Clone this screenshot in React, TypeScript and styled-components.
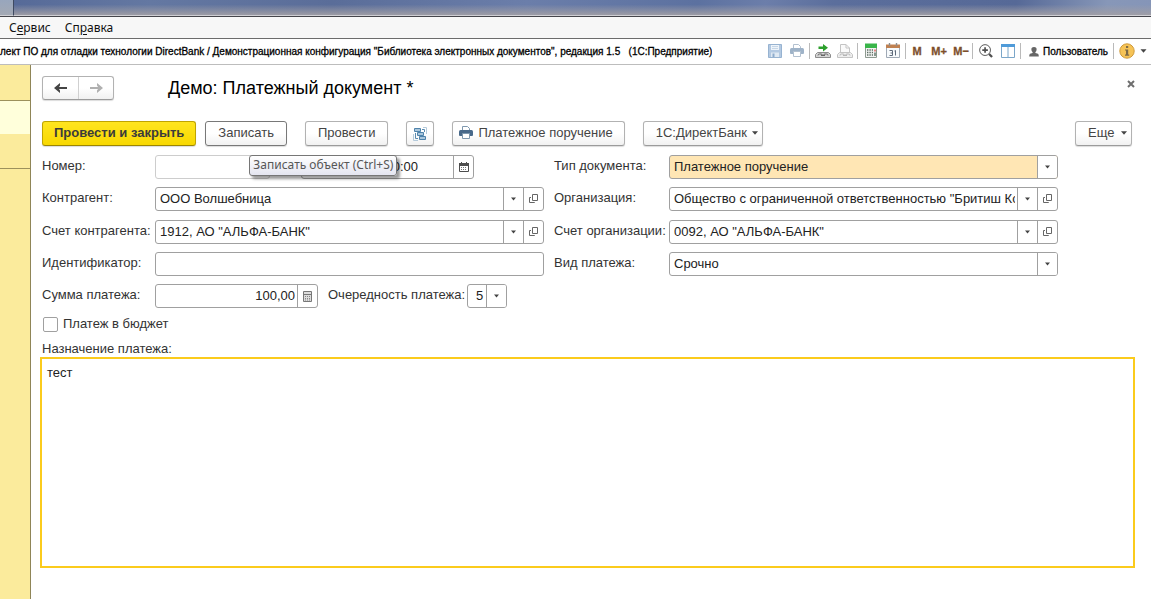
import React from "react";
import styled, { createGlobalStyle, css } from "styled-components";

const GlobalStyle = createGlobalStyle`
  *, *::before, *::after { box-sizing: border-box; }
  body {
    margin: 0;
    background: #fff;
    color: #333;
    font: 13px/16px "Liberation Sans", Arial, sans-serif;
  }
  button, input, select, textarea { font: inherit; color: inherit; margin: 0; }
`;

const uiFont = `"Noto Sans", "Segoe UI", sans-serif`;

const Page = styled.div`
  display: flex;
  flex-direction: column;
  min-height: 100vh;
`;

const WindowFrame = styled.div`
  display: flex;
  height: 17px;
  flex: none;
  border-bottom: 1px solid #45454b;
`;
const FrameCorner = styled.div`
  width: 14px;
  border-right: 1px solid #3f4a61;
  border-bottom: 1px solid #cfcfd4;
  background: linear-gradient(#98a6bd, #a3a9b4);
`;
const FrameGlass = styled.div`
  flex: 1;
  border-bottom: 1px solid #cfcfd4;
  background:
    linear-gradient(rgba(160, 158, 165, 0) 30%, rgba(160, 158, 165, 0.95)),
    linear-gradient(100deg, #566a98 0%, #6478a2 12%, #5a6d99 28%, #6b7eaa 45%, #5c71a0 60%, #6c7eaa 66%, #5b6e9c 72%, #566997 88%, #8797b8 96%, #8595b8 100%);
`;

const MenuBar = styled.nav`
  display: flex;
  flex: none;
  gap: 14px;
  height: 22px;
  padding: 0 9px;
  align-items: center;
  background: #f7f7f7;
  border-bottom: 1px solid #6c6c6c;
`;
const MenuItem = styled.button`
  padding: 0;
  border: 0;
  background: none;
  color: #111;
  font: 12px/20px ${uiFont};
  u { text-underline-offset: 2px; }
`;

const TitleBar = styled.header`
  display: flex;
  flex: none;
  height: 26px;
  align-items: center;
  justify-content: space-between;
  border-bottom: 1px solid #bdbdbd;
  color: #000;
  font-size: 10px;
  white-space: pre;
`;
const AppTitle = styled.div`
  min-width: 0;
  overflow: hidden;
  -webkit-text-stroke: 0.3px #000;
`;
const Tools = styled.div`
  display: flex;
  align-items: center;
  padding: 0 4px 2px 0;
`;
const ToolGroup = styled.div<{ $flush?: boolean; $plain?: boolean }>`
  display: flex;
  height: 16px;
  align-items: center;
  gap: ${(p) => (p.$flush ? 0 : 6)}px;
  padding: ${(p) => (p.$flush ? "0" : "0 4px 0 5px")};
  border-left: ${(p) => (p.$plain ? "0" : "1px solid #bababa")};
`;
const ToolButton = styled.button<{ $width?: number }>`
  display: flex;
  width: ${(p) => p.$width ?? 16}px;
  height: 16px;
  padding: 0;
  border: 0;
  align-items: center;
  justify-content: center;
  background: none;
  svg { flex: none; }
`;
const MemoryButton = styled(ToolButton)`
  color: #7d4f2c;
  font-size: 11px;
  font-weight: bold;
  -webkit-text-stroke: 0.3px #7d4f2c;
`;
const UserButton = styled.button`
  display: flex;
  padding: 2px 1px 0 3px;
  border: 0;
  gap: 4px;
  align-items: center;
  background: none;
  color: #000;
  -webkit-text-stroke: 0.3px #000;
`;

const Workspace = styled.div`
  display: flex;
  flex: 1;
`;
const Sections = styled.aside`
  display: flex;
  flex: none;
  flex-direction: column;
  width: 31px;
  border-right: 1px solid #8f8557;
  background: #fbeb9c;
`;
const Section = styled.div<{ $height: number; $active?: boolean; $line?: boolean }>`
  height: ${(p) => p.$height}px;
  background: ${(p) => (p.$active ? "#ffffdb" : "#fbeb9c")};
  border-bottom: ${(p) => (p.$line ? "1px solid #9c915c" : "0")};
`;

const Main = styled.main`
  display: flex;
  flex: 1;
  min-width: 0;
  flex-direction: column;
  padding: 11px 16px 31px 9px;
`;
const FormHeader = styled.div`
  display: flex;
  height: 24px;
  padding-left: 2px;
  align-items: center;
`;
const raised = css`
  border: 1px solid #b2b2b2;
  border-bottom-color: #9b9b9b;
  border-radius: 3px;
  background: linear-gradient(#fff 50%, #f1f1f1);
  box-shadow: 0 1px 1px rgba(0, 0, 0, 0.14);
`;
const History = styled.div`
  ${raised}
  display: flex;
  height: 24px;
`;
const HistoryButton = styled.button`
  display: flex;
  width: 35px;
  padding: 0;
  border: 0;
  align-items: center;
  justify-content: center;
  background: none;
  & + & { border-left: 1px solid #d0d0d0; }
`;
const FormTitle = styled.h1`
  flex: 1;
  margin: 0 0 0 54px;
  color: #000;
  font-size: 18px;
  font-weight: normal;
  line-height: 24px;
`;
const CloseButton = styled.button`
  display: flex;
  width: 8px;
  height: 16px;
  padding: 0;
  border: 0;
  align-self: flex-start;
  align-items: center;
  background: none;
`;

const Commands = styled.div`
  display: flex;
  height: 25px;
  margin: 21px 3px 9px 2px;
  gap: 18px;
`;
const CommandPair = styled.div`
  display: flex;
  gap: 9px;
`;
const CommandHost = styled.div`
  display: flex;
  position: relative;
`;
type CommandKind = "plain" | "primary" | "icon" | "print" | "menu";
const commandPadding: Record<CommandKind, string> = {
  plain: "0 12px 2px",
  primary: "0 11px 2px",
  icon: "0 6px",
  print: "0 11px 2px 6px",
  menu: "0 4px 2px 12px",
};
const Command = styled.button<{ $kind?: CommandKind; $hover?: boolean; $end?: boolean }>`
  ${raised}
  display: flex;
  height: 25px;
  padding: ${(p) => commandPadding[p.$kind ?? "plain"]};
  align-items: center;
  justify-content: space-between;
  gap: 5px;
  color: #444;
  white-space: nowrap;
  ${(p) => p.$end && css`min-width: 57px; margin-left: auto;`}
  ${(p) => p.$hover && css`border-color: #787878;`}
  ${(p) => p.$kind === "primary" && css`
    border-color: #bfa400;
    border-bottom-color: #9c8600;
    background: linear-gradient(#ffe51f, #f8d800);
    color: #3b3b3b;
    font-weight: bold;
  `}
`;
const Tooltip = styled.div`
  position: absolute;
  z-index: 2;
  top: 34px;
  left: 44px;
  height: 21px;
  padding: 0 3px;
  border: 1px solid #767676;
  border-radius: 3px;
  background: linear-gradient(#fff, #e4e5f0);
  box-shadow: 3px 3px 3px rgba(0, 0, 0, 0.4);
  color: #575757;
  font: 12px/18px ${uiFont};
  white-space: nowrap;
`;

const Fields = styled.div`
  display: grid;
  grid-template-columns: 113px minmax(0, 1fr) 125px minmax(0, 1fr);
  grid-auto-rows: 24px;
  row-gap: 8px;
  margin: 0 77px 0 2px;
  & + & { margin-top: 9px; }
`;
const Label = styled.label<{ $second?: boolean; $width?: number }>`
  width: ${(p) => (p.$width ? `${p.$width}px` : "auto")};
  padding-left: ${(p) => (p.$second ? 10 : 0)}px;
  line-height: 22px;
  white-space: nowrap;
`;
const Cell = styled.div`
  display: flex;
`;
const Box = styled.div<{ $width?: number; $muted?: boolean }>`
  display: flex;
  flex: ${(p) => (p.$width ? "none" : "1")};
  min-width: 0;
  width: ${(p) => (p.$width ? `${p.$width}px` : "auto")};
  height: 24px;
  border: 1px solid ${(p) => (p.$muted ? "#cdcdcd" : "#a0a0a0")};
  border-radius: 3px;
  background: #fff;
`;
const DateBox = styled(Box)`
  margin-left: 31px;
`;
const AmountBox = styled(Box)`
  margin-right: 10px;
`;
const TextInput = styled.input<{ $right?: boolean }>`
  flex: 1;
  min-width: 0;
  width: 100%;
  padding: 0 2px 0 4px;
  border: 0;
  outline: 0;
  background: none;
  color: #222;
  text-align: ${(p) => (p.$right ? "right" : "left")};
`;
const BoxButton = styled.button`
  display: flex;
  flex: none;
  width: 20px;
  padding: 0;
  border: 0;
  border-left: 1px solid #a0a0a0;
  align-items: center;
  justify-content: center;
  background: none;
`;
const SelectBox = styled(Box)<{ $filled?: boolean }>`
  display: grid;
  grid-template-columns: minmax(0, 1fr) 20px;
  background: ${(p) => (p.$filled ? "#ffe6b4" : "#fff")};
`;
const SelectInput = styled.select<{ $indent?: number }>`
  grid-area: 1 / 1 / 2 / 3;
  appearance: none;
  padding: 0 0 0 ${(p) => p.$indent ?? 4}px;
  border: 0;
  outline: 0;
  background: none;
  color: #222;
`;
const SelectArrow = styled.span`
  grid-area: 1 / 2 / 2 / 3;
  display: flex;
  border-left: 1px solid #a0a0a0;
  border-radius: 0 2px 2px 0;
  align-items: center;
  justify-content: center;
  background: #fff;
  pointer-events: none;
`;

const CheckRow = styled.label`
  display: flex;
  height: 16px;
  margin: 8px 0 0 3px;
  align-items: center;
  gap: 5px;
`;
const CheckBox = styled.input`
  appearance: none;
  width: 15px;
  height: 15px;
  border: 1px solid #a0a0a0;
  border-radius: 2px;
  background: #fff;
  &:checked { background: #ffe51f; }
`;
const PurposeLabel = styled.label`
  margin: 9px 0 0 2px;
`;
const Purpose = styled.textarea`
  flex: 1;
  min-height: 120px;
  padding: 6px 5px;
  border: 2px solid #fbcb1c;
  outline: 0;
  background: #fff;
  color: #222;
  resize: none;
`;

const Arrow = ({ size = 6, color = "#444" }: { size?: number; color?: string }) => (
  <svg width={size} height="4" viewBox="0 0 6 4" aria-hidden="true">
    <path d="M0 0.3H6L3 3.8Z" fill={color} />
  </svg>
);
const OpenIcon = () => (
  <svg width="10" height="10" viewBox="0 0 10 10" fill="none" stroke="#666" aria-hidden="true">
    <path d="M3.5 0.5H8.5V6.5H3.5Z M2 3.5H0.5V8.5H5.5V8" />
  </svg>
);
const CalendarIcon = () => (
  <svg width="10" height="10" viewBox="0 0 10 10" aria-hidden="true">
    <path d="M0.5 1.5H9.5V9.5H0.5Z" fill="#fff" stroke="#4d4d4d" />
    <path d="M0 1H10V4H0Z M2 0H3V2H2Z M7 0H8V2H7Z" fill="#4d4d4d" />
    <path d="M2 5.5H8M2 7.5H8" stroke="#777" strokeDasharray="1 1" />
  </svg>
);
const CalculatorIcon = () => (
  <svg width="9" height="11" viewBox="0 0 9 11" aria-hidden="true">
    <path d="M0.5 0.5H8.5V10.5H0.5Z" fill="#ddd" stroke="#777" />
    <path d="M1 3.5H8" stroke="#777" />
    <path d="M2 5.5H7M2 7.5H7M2 9H7" stroke="#888" strokeDasharray="1 1" />
  </svg>
);
const HistoryIcon = ({ color, flip }: { color: string; flip?: boolean }) => (
  <svg width="14" height="10" viewBox="0 0 14 10" fill={color} aria-hidden="true">
    <path d={flip ? "M14 5L8 0V2.4L9 3.9H1V6.1H9L8 7.6V10Z" : "M0 5L6 0V2.4L5 3.9H13V6.1H5L6 7.6V10Z"} />
  </svg>
);
const StructureIcon = () => (
  <svg width="14" height="14" viewBox="0 0 14 14" fill="none" aria-hidden="true">
    <path d="M1.5 1.5H7.5V4.5H1.5Z M4.5 5.5H10.5V8.5H4.5Z M6.5 9.5H12.5V12.5H6.5Z" fill="#a9c6dc" stroke="#4f83ab" />
    <path d="M2.5 6V11.5H5M9 2.5H11.5V5" stroke="#5b8cb0" />
    <path d="M10 0.5H13.5V7M0.5 7V13.5H5" stroke="#b4cadb" />
  </svg>
);
const PrinterIcon = ({ pale }: { pale?: boolean }) => (
  <svg width="14" height="13" viewBox="0 0 14 13" aria-hidden="true">
    <path d="M3.5 4.5V0.5H8.5L10.5 2.5V4.5" fill="#fff" stroke={pale ? "#b3c1d0" : "#7f98ae"} />
    <path d="M1.5 4H12.5Q14 4 14 5.5V9Q14 10 13 10H1Q0 10 0 9V5.5Q0 4 1.5 4Z" fill={pale ? "#9fb3c8" : "#48698a"} />
    <path d="M3.5 7.5H10.5V12.5H3.5Z" fill="#fff" stroke={pale ? "#b3c1d0" : "#7f98ae"} />
  </svg>
);
const SaveIcon = () => (
  <svg width="14" height="14" viewBox="0 0 14 14" aria-hidden="true">
    <path d="M0.5 0.5H13.5V13.5H0.5Z" fill="#b3c9e2" stroke="#97b3d1" />
    <path d="M3 1H11V6H3Z" fill="#eef4fa" />
    <path d="M4 2.5H10M4 4.5H10" stroke="#c6d6e6" />
    <path d="M3 8.5H11V13H3Z" fill="#dfe9f3" />
    <path d="M4.5 9.5H6.5V13H4.5Z" fill="#8dabcc" />
  </svg>
);
const LinkIcon = ({ active }: { active?: boolean }) => (
  <svg width="16" height="16" viewBox="0 0 16 16" fill="none" aria-hidden="true">
    {active ? (
      <path d="M3.5 3.5H8V1L13 4.8L8 8.5V6H3.5Z" fill="#2ca02c" />
    ) : (
      <path d="M3.5 9V1.5H9L12.5 5V9M9 1.5V5H12.5" fill="#fafafa" stroke="#c4c4c4" />
    )}
    <path d="M2.5 9.5H13.5L15.5 11.5V14.5H0.5V11.5Z" fill={active ? "#d5d5d5" : "#eee"} stroke={active ? "#8c8c8c" : "#c4c4c4"} />
    <path d="M3 12.5Q3 11 4.5 11H6Q7.5 11 7.5 12.5M8.5 12.5Q8.5 11 10 11H11.5Q13 11 13 12.5M6 12.5H10" stroke={active ? "#666" : "#b5b5b5"} />
  </svg>
);
const GreenCalculatorIcon = () => (
  <svg width="14" height="15" viewBox="0 0 14 15" aria-hidden="true">
    <path d="M1.5 1.5H12.5V14.5H1.5Z" fill="#f3f3f3" stroke="#8d9a90" />
    <path d="M1 0.5H13V5H1Z" fill="#39b54a" />
    <path d="M3 7H9M3 9.5H9M3 12H9" stroke="#5b6f62" strokeWidth="1.4" strokeDasharray="1.4 1" />
    <path d="M11 6.5V8.5" stroke="#d9534f" strokeWidth="1.4" />
    <path d="M11 9.5V13" stroke="#5b6f62" strokeWidth="1.4" />
  </svg>
);
const DateIcon = () => (
  <svg width="14" height="15" viewBox="0 0 14 15" aria-hidden="true">
    <path d="M0.5 2.5H13.5V14.5H0.5Z" fill="#f7fafc" stroke="#9fa9b5" />
    <path d="M0 1.5H14V5H0Z" fill="#c08050" />
    <path d="M3.5 0V3M10.5 0V3" stroke="#8d8d8d" strokeWidth="1.4" />
    <path d="M3.5 7.5H6.5V12.5H3.5M4.5 10H6.5M8.5 8L9.5 7.5V12.5" fill="none" stroke="#5d6a7a" />
  </svg>
);
const ZoomIcon = () => (
  <svg width="14" height="14" viewBox="0 0 15 15" fill="none" stroke="#4f4f4f" aria-hidden="true">
    <circle cx="6.5" cy="6.5" r="5.8" fill="#fff" strokeWidth="1" />
    <path d="M3.5 6.5H9.5M6.5 3.5V9.5" strokeWidth="1.8" />
    <path d="M10.8 10.8L14 14" strokeWidth="2.4" />
  </svg>
);
const PanelsIcon = () => (
  <svg width="14" height="14" viewBox="0 0 14 14" aria-hidden="true">
    <path d="M0.5 0.5H13.5V13.5H0.5Z M7 3V13" fill="#fff" stroke="#7ba6c9" />
    <path d="M0 0H14V3H0Z" fill="#4f9bd9" />
  </svg>
);
const UserIcon = () => (
  <svg width="10" height="10" viewBox="0 0 10 10" fill="#666" aria-hidden="true">
    <path d="M5 0C6.9 0 7.8 1.1 7.6 2.7C7.5 3.8 6.9 4.7 6.4 5.1V6L9 6.8Q9.8 7.2 9.8 9.5H0.2Q0.2 7.2 1 6.8L3.6 6V5.1C3.1 4.7 2.5 3.8 2.4 2.7C2.2 1.1 3.1 0 5 0Z" />
  </svg>
);
const InfoIcon = () => (
  <svg width="16" height="16" viewBox="0 0 16 16" aria-hidden="true">
    <circle cx="8" cy="8" r="7.2" fill="#f6c356" stroke="#cf9a3a" />
    <path d="M7 3H9.2V5H7Z M6 6.5H9.2V11.5H10.2V12.7H6V11.5H7V7.6H6Z" fill="#7d6a45" />
  </svg>
);
const CloseIcon = () => (
  <svg width="8" height="8" viewBox="0 0 8 8" stroke="#6e6e6e" strokeWidth="2" aria-hidden="true">
    <path d="M1 1L7 7M7 1L1 7" />
  </svg>
);

function LookupField({ id, value }: { id: string; value: string }) {
  return (
    <Box>
      <TextInput id={id} defaultValue={value} />
      <BoxButton type="button" aria-label="Выбрать"><Arrow size={5} /></BoxButton>
      <BoxButton type="button" aria-label="Открыть"><OpenIcon /></BoxButton>
    </Box>
  );
}

interface DropDownProps {
  id: string;
  value: string;
  filled?: boolean;
  width?: number;
  indent?: number;
}
function DropDown({ id, value, filled, width, indent }: DropDownProps) {
  return (
    <SelectBox $filled={filled} $width={width}>
      <SelectInput id={id} defaultValue={value} $indent={indent}>
        <option>{value}</option>
      </SelectInput>
      <SelectArrow><Arrow size={5} /></SelectArrow>
    </SelectBox>
  );
}

export default function App() {
  return (
    <Page>
      <GlobalStyle />
      <WindowFrame>
        <FrameCorner />
        <FrameGlass />
      </WindowFrame>
      <MenuBar>
        <MenuItem type="button">С<u>е</u>рвис</MenuItem>
        <MenuItem type="button">Сп<u>р</u>авка</MenuItem>
      </MenuBar>
      <TitleBar>
        <AppTitle>
          {'лект ПО для отладки технологии DirectBank / Демонстрационная конфигурация "Библиотека электронных документов", редакция 1.5   (1С:Предприятие)'}
        </AppTitle>
        <Tools>
          <ToolGroup $plain>
            <ToolButton aria-label="Сохранить"><SaveIcon /></ToolButton>
            <ToolButton aria-label="Печать"><PrinterIcon pale /></ToolButton>
          </ToolGroup>
          <ToolGroup>
            <ToolButton aria-label="Получить ссылку"><LinkIcon active /></ToolButton>
            <ToolButton aria-label="Перейти по ссылке"><LinkIcon /></ToolButton>
          </ToolGroup>
          <ToolGroup>
            <ToolButton aria-label="Калькулятор"><GreenCalculatorIcon /></ToolButton>
            <ToolButton aria-label="Календарь"><DateIcon /></ToolButton>
          </ToolGroup>
          <ToolGroup $flush>
            <MemoryButton $width={22}>M</MemoryButton>
            <MemoryButton $width={22}>M+</MemoryButton>
            <MemoryButton $width={22}>M−</MemoryButton>
          </ToolGroup>
          <ToolGroup>
            <ToolButton aria-label="Масштаб"><ZoomIcon /></ToolButton>
            <ToolButton aria-label="Панели"><PanelsIcon /></ToolButton>
          </ToolGroup>
          <ToolGroup>
            <UserButton><UserIcon />Пользователь</UserButton>
          </ToolGroup>
          <ToolGroup>
            <ToolButton aria-label="О программе"><InfoIcon /></ToolButton>
          </ToolGroup>
          <ToolButton $width={8} aria-label="Ещё команды"><Arrow size={7} /></ToolButton>
        </Tools>
      </TitleBar>
      <Workspace>
        <Sections>
          <Section $height={36} $line />
          <Section $height={33} $active />
          <Section $height={35} $line />
        </Sections>
        <Main>
          <FormHeader>
            <History>
              <HistoryButton aria-label="Назад"><HistoryIcon color="#444" /></HistoryButton>
              <HistoryButton aria-label="Вперёд"><HistoryIcon color="#b0b0b0" flip /></HistoryButton>
            </History>
            <FormTitle>Демо: Платежный документ *</FormTitle>
            <CloseButton aria-label="Закрыть"><CloseIcon /></CloseButton>
          </FormHeader>
          <Commands>
            <CommandPair>
              <Command $kind="primary">Провести и закрыть</Command>
              <CommandHost>
                <Command $hover aria-describedby="save-hint">Записать</Command>
                <Tooltip id="save-hint" role="tooltip">Записать объект (Ctrl+S)</Tooltip>
              </CommandHost>
            </CommandPair>
            <Command>Провести</Command>
            <Command $kind="icon" aria-label="Структура подчиненности"><StructureIcon /></Command>
            <Command $kind="print"><PrinterIcon />Платежное поручение</Command>
            <Command $kind="menu">1С:ДиректБанк<Arrow /></Command>
            <Command $kind="menu" $end>Еще<Arrow /></Command>
          </Commands>
          <Fields>
            <Label htmlFor="number">Номер:</Label>
            <Cell>
              <Box $width={115} $muted><TextInput id="number" /></Box>
              <DateBox $width={173}>
                <TextInput aria-label="Дата" defaultValue="01.01.2016 0:00:00" />
                <BoxButton aria-label="Выбрать дату"><CalendarIcon /></BoxButton>
              </DateBox>
            </Cell>
            <Label $second htmlFor="doc-type">Тип документа:</Label>
            <DropDown id="doc-type" value="Платежное поручение" filled />

            <Label htmlFor="partner">Контрагент:</Label>
            <LookupField id="partner" value="ООО Волшебница" />
            <Label $second htmlFor="company">Организация:</Label>
            <LookupField id="company" value={'Общество с ограниченной ответственностью "Бритиш Косметикс"'} />
          </Fields>
          <Fields>
            <Label htmlFor="partner-account">Счет контрагента:</Label>
            <LookupField id="partner-account" value={'1912, АО "АЛЬФА-БАНК"'} />
            <Label $second htmlFor="company-account">Счет организации:</Label>
            <LookupField id="company-account" value={'0092, АО "АЛЬФА-БАНК"'} />

            <Label htmlFor="identifier">Идентификатор:</Label>
            <Box><TextInput id="identifier" /></Box>
            <Label $second htmlFor="payment-kind">Вид платежа:</Label>
            <DropDown id="payment-kind" value="Срочно" />

            <Label htmlFor="amount">Сумма платежа:</Label>
            <Cell>
              <AmountBox $width={163}>
                <TextInput id="amount" $right defaultValue="100,00" />
                <BoxButton aria-label="Калькулятор"><CalculatorIcon /></BoxButton>
              </AmountBox>
              <Label htmlFor="priority" $width={139}>Очередность платежа:</Label>
              <DropDown id="priority" value="5" width={40} indent={8} />
            </Cell>
          </Fields>
          <CheckRow>
            <CheckBox type="checkbox" />
            Платеж в бюджет
          </CheckRow>
          <PurposeLabel htmlFor="purpose">Назначение платежа:</PurposeLabel>
          <Purpose id="purpose" defaultValue="тест" />
        </Main>
      </Workspace>
    </Page>
  );
}
